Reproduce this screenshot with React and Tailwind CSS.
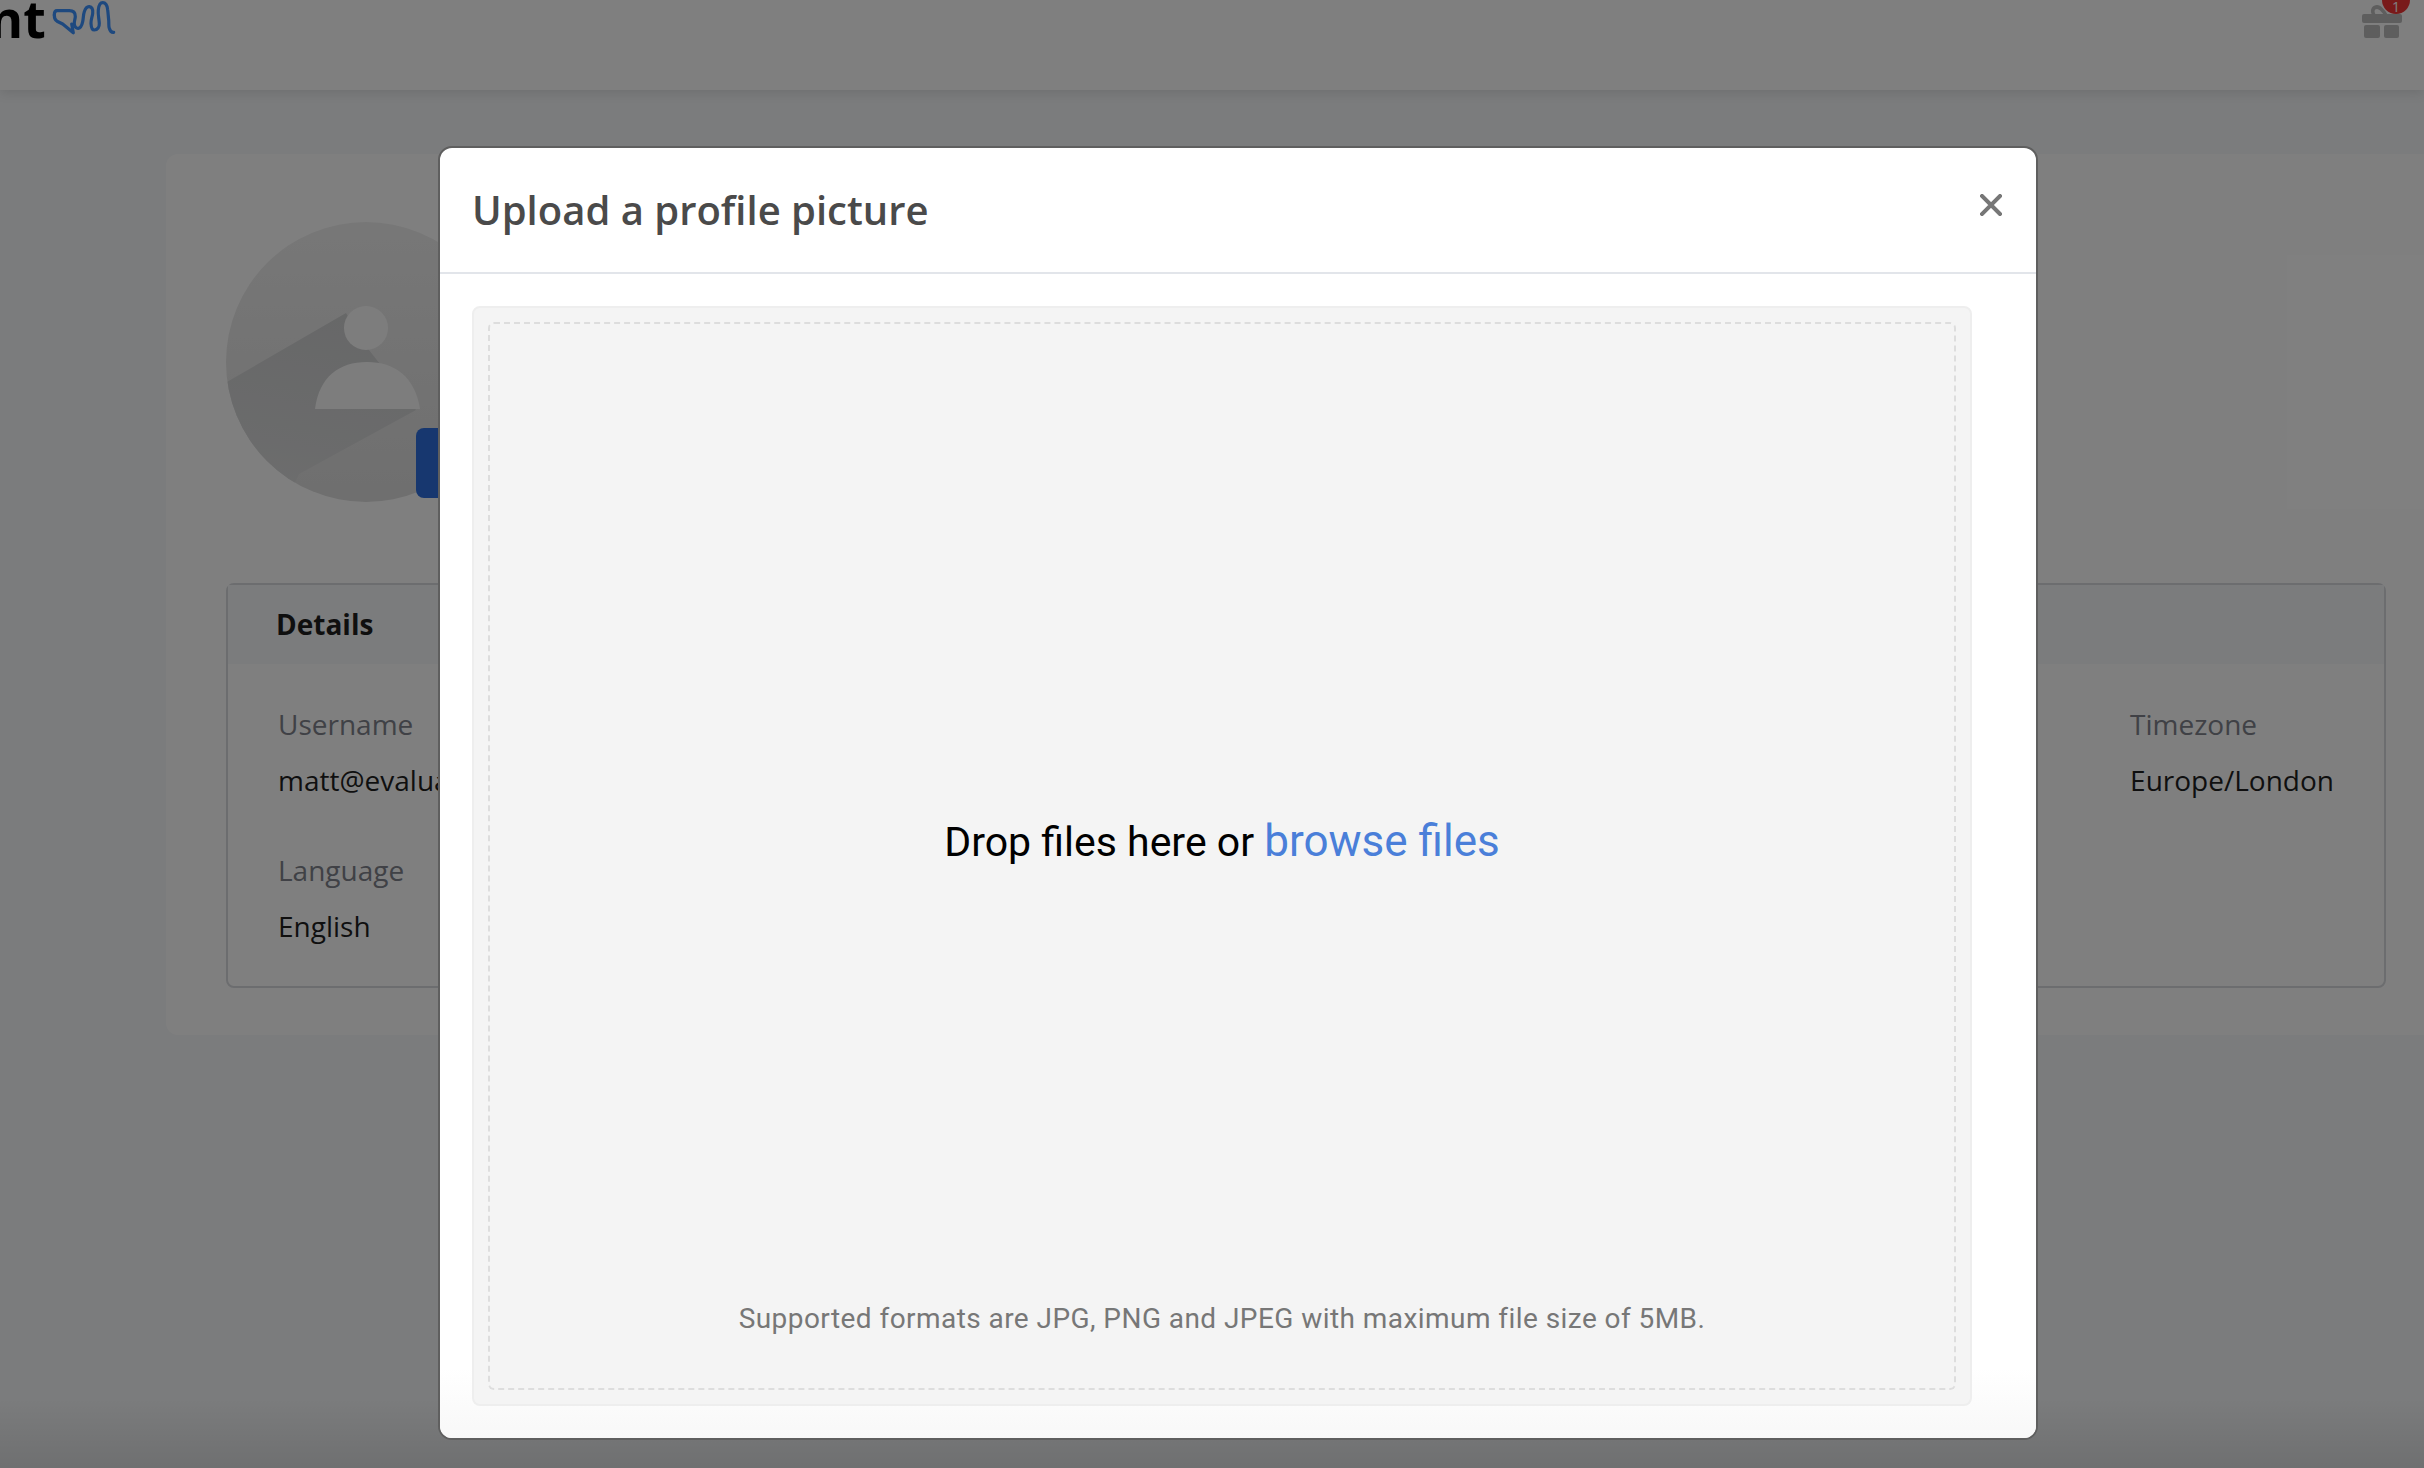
function LogoWave() {
  return (
    <svg width="64" height="36" viewBox="0 0 64 36" fill="none" stroke="#3c92ff" strokeWidth="3.2" strokeLinecap="round" strokeLinejoin="round" aria-hidden="true">
      <path d="M2.300 15C2.300 12 3 10.700 5 10.700H17.300C21 10.700 23.300 12.500 23.300 16.500C23.300 19 22 21 22.300 24C22.600 27 24.500 28.500 26.300 28.300C29 28 30 25 30.700 21.700C31.500 17.500 31.300 14.500 32.300 11.700C33.300 8.700 35 6.500 37.300 6.700C40 7 41 10 40.700 13.300C40.400 16.500 38.800 19.500 39 23.300C39.200 27 40.300 30 42.300 30C45.500 30 47.500 27 47.300 23.300C47 18.500 45.800 14.500 46.300 10C46.700 6 48.300 2.700 50.700 2.700C54 2.700 55.300 6 55.700 10C56.200 14 56.300 17 56.700 20C57 24 56.500 26.500 57.300 28.300C58.200 31.500 60 32.500 61.700 32.300" />
      <path d="M2.300 15C2.300 18 3 20 5 21.200L10.700 24L21.300 32.700L19.700 24" />
    </svg>
  );
}

function Avatar() {
  return (
    <svg width="280" height="280" viewBox="0 0 280 280" className="shrink-0" aria-hidden="true">
      <defs>
        <clipPath id="avatarClip">
          <circle cx="140" cy="140" r="140" />
        </clipPath>
        <linearGradient id="avatarBase" x1="0" y1="0" x2="0" y2="1">
          <stop offset="0" stopColor="#efefef" />
          <stop offset="1" stopColor="#dedede" />
        </linearGradient>
        <linearGradient id="avatarShadow" x1="0.5" y1="0" x2="0.3" y2="1">
          <stop offset="0" stopColor="#cfd0d1" />
          <stop offset="0.7" stopColor="#d6d7d8" />
          <stop offset="1" stopColor="#dcdcdc" />
        </linearGradient>
      </defs>
      <circle cx="140" cy="140" r="140" fill="url(#avatarBase)" />
      <g clipPath="url(#avatarClip)">
        <path d="M0 160.500 L120 91 L143 128 L190 188 L73 252 L60 280 L0 280 Z" fill="url(#avatarShadow)" />
      </g>
      <circle cx="140" cy="106" r="22" fill="#fbfbfb" />
      <path d="M89 187 C93 155 113 140 141 140 C169 140 189 155 194 187 Z" fill="#fbfbfb" />
    </svg>
  );
}

function Field({ label, value }) {
  return (
    <div className="flex flex-col gap-[21px]">
      <div className="text-[28px] leading-[35px] text-[#80838c]">{label}</div>
      <div className="text-[28px] leading-[35px] text-[#1f1f1f] whitespace-nowrap">{value}</div>
    </div>
  );
}

export default function App() {
  return (
    <div className="relative h-[1468px] w-[2424px] overflow-hidden bg-[#f6f8fa] font-['Open_Sans',sans-serif]">
      {/* Top bar */}
      <header className="flex h-[90px] items-start justify-between bg-white pr-[21px] shadow-[0_2px_12px_rgba(0,0,0,0.12)]">
        <div className="flex items-start gap-[6px]">
          <span className="-ml-[11px] -mt-[12px] text-[52px] font-bold leading-[60px] text-black">nt</span>
          <LogoWave />
        </div>
        <div className="relative mt-[3px]">
          <svg width="42" height="36" viewBox="0 0 42 36" fill="#bcbcbc" aria-hidden="true">
            <path d="M11 12 C8 6 12 2 16 2 C20 2 24 7 27 12 L23 12 C20 8 18 6 16 6 C13 6 13 9 15 12 Z" />
            <rect x="1" y="11" width="40" height="9" rx="2" />
            <rect x="3" y="22" width="16" height="13" rx="2" />
            <rect x="23" y="22" width="15" height="13" rx="2" />
          </svg>
          <span className="absolute -right-[7px] -top-[17px] flex h-[28px] w-[28px] items-end justify-center rounded-full bg-[#f23535] text-[14px] leading-[14px] text-white">1</span>
        </div>
      </header>

      {/* Profile card */}
      <main className="ml-[166px] mt-[64px] flex h-[881px] flex-col rounded-l-[12px] bg-white pl-[60px] pr-[38px] pt-[68px]">
        <div className="relative h-[280px] w-[280px]">
          <Avatar />
          <div className="absolute left-[190px] top-[206px] h-[70px] w-[120px] rounded-[8px] bg-[#2e6fde]" />
        </div>
        <section className="mt-[81px] h-[405px] rounded-[8px] border-2 border-[#d8dade]">
          <div className="flex h-[79px] items-center bg-[#f6f8fa] pb-[2px] pl-[48px] text-[28px] font-bold text-[#1f1f1f]">Details</div>
          <div className="flex justify-between pl-[50px] pr-[50px] pt-[43px]">
            <div className="flex flex-col gap-[55px]">
              <Field label="Username" value="matt@evaluagent.com" />
              <Field label="Language" value="English" />
            </div>
            <Field label="Timezone" value="Europe/London" />
          </div>
        </section>
      </main>

      {/* Overlay + modal */}
      <div className="absolute inset-0 bg-black/50">
        <div className="absolute inset-x-0 bottom-0 h-[70px] bg-gradient-to-b from-transparent to-black/10" />
        <div className="absolute left-[438px] top-[146px] flex h-[1294px] w-[1600px] flex-col overflow-hidden rounded-[14px] border-2 border-[#5f5f5f] bg-white">
          <div className="flex h-[126px] shrink-0 items-start justify-between border-b-2 border-[#e2e5ea] pl-[32px] pr-[34px]">
            <h2 className="mt-[35px] text-[40px] font-semibold leading-[54px] text-[#4a4a4a]">Upload a profile picture</h2>
            <svg width="22" height="22" viewBox="0 0 22 22" className="mt-[46px]" stroke="#777777" strokeWidth="4" strokeLinecap="square" aria-hidden="true">
              <path d="M2 2 L20 20 M20 2 L2 20" />
            </svg>
          </div>
          <div className="flex flex-1 flex-col bg-gradient-to-b from-white from-[94%] to-[#f8f8f8] pb-[32px] pl-[32px] pr-[64px] pt-[32px]">
            <div className="flex flex-1 rounded-[8px] border-2 border-[#eeeeee] bg-[#f4f4f4] p-[14px]">
              <div className="relative flex flex-1 items-center justify-center rounded-[6px] border-2 border-dashed border-[#dddddd] pb-[30px] font-['Roboto',sans-serif]">
                <p className="text-[41px] text-black">
                  Drop files here or <span className="text-[44px] text-[#4a7fd9]">browse files</span>
                </p>
                <p className="absolute bottom-[48px] left-0 right-0 text-center text-[28px] tracking-[0.44px] text-[#777777]">
                  Supported formats are JPG, PNG and JPEG with maximum file size of 5MB.
                </p>
              </div>
            </div>
          </div>
        </div>
      </div>
    </div>
  );
}
